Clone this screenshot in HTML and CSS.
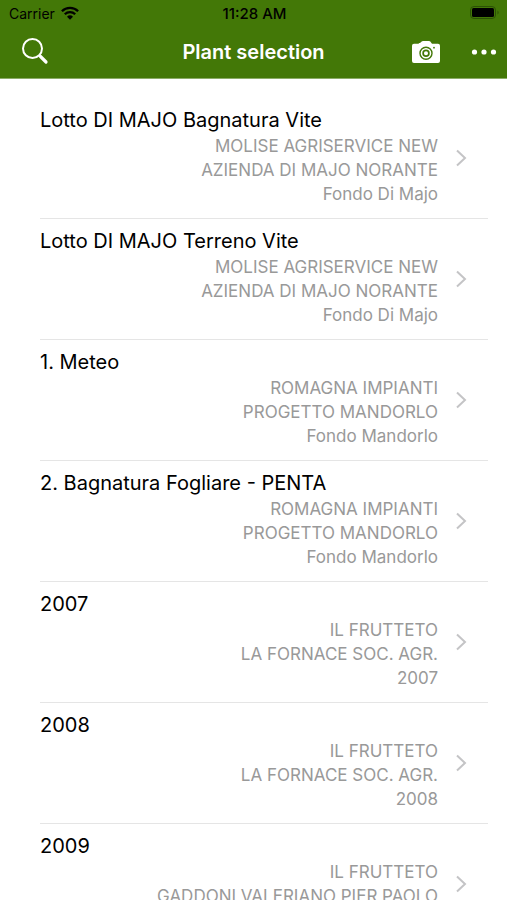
FILE: index.html
```html
<!DOCTYPE html>
<html lang="en">
<head>
<meta charset="utf-8">
<meta name="viewport" content="width=device-width, initial-scale=1">
<title>Plant selection</title>
<link rel="stylesheet" href="styles.css">
</head>
<body>
<header class="header">
  <div class="status">
    <div class="carrier">
      <span>Carrier</span>
      <svg width="18" height="14" viewBox="0 0 18 14" fill="none" stroke="currentColor" stroke-width="2.3" aria-hidden="true">
        <path d="M.9 5.2a11.5 11.5 0 0 1 16.2 0M3.8 8.3a7.4 7.4 0 0 1 10.4 0"/>
        <path d="M6 10.7a4.3 4.3 0 0 1 6 0L9 13.7z" fill="currentColor" stroke="none"/>
      </svg>
    </div>
    <time class="clock">11:28 AM</time>
    <svg class="battery" width="30" height="14" viewBox="0 0 30 14" aria-hidden="true">
      <rect x=".5" y=".5" width="25" height="12" rx="3.5" fill="none" stroke="#2c5205"/>
      <rect x="2" y="2" width="22" height="9" rx="1.5" fill="#000"/>
      <path d="M27.5 4.5a2.4 2.4 0 0 1 0 4z" fill="#2c5205"/>
    </svg>
  </div>
  <div class="toolbar">
    <button class="tool search" type="button" aria-label="Search">
      <svg width="28" height="28" viewBox="0 0 28 28" fill="none" stroke="currentColor" aria-hidden="true">
        <circle cx="11.5" cy="10.5" r="9.5" stroke-width="2"/>
        <path d="M18.300 17.300l1.500 1.500" stroke-width="2"/>
        <path d="M19.500 18.500l5.500 5.500" stroke-width="3.200" stroke-linecap="round"/>
      </svg>
    </button>
    <h1 class="heading">Plant selection</h1>
    <div class="actions">
      <button class="tool" type="button" aria-label="Scan with camera">
        <svg width="30" height="22" viewBox="0 0 30 22" aria-hidden="true">
          <path d="M3 2.8h4.500l.7-.7h.8L10.700.6Q11.200 0 12 0h6q.8 0 1.300.6L21 2.800h6a2 2 0 0 1 2 2V20a2 2 0 0 1-2 2H3a2 2 0 0 1-2-2V4.800a2 2 0 0 1 2-2z" fill="#fff"/>
          <circle cx="15" cy="12.200" r="6" fill="none" stroke="#437807" stroke-width="1.400"/>
          <circle cx="15" cy="12.200" r="2.900" fill="none" stroke="#437807" stroke-width="1.700"/>
          <circle cx="23" cy="6.700" r=".9" fill="#437807"/>
        </svg>
      </button>
      <button class="tool" type="button" aria-label="More options">
        <svg width="26" height="6" viewBox="0 0 26 6" fill="currentColor" aria-hidden="true">
          <circle cx="3.500" cy="3" r="2.600"/><circle cx="13" cy="3" r="2.600"/><circle cx="22.500" cy="3" r="2.600"/>
        </svg>
      </button>
    </div>
  </div>
</header>
<main class="content">
  <ul class="list">
    <li><a class="row" href="#p1"><span class="name">Lotto DI MAJO Bagnatura Vite</span><span class="detail"><span>MOLISE AGRISERVICE NEW</span><span>AZIENDA DI MAJO NORANTE</span><span>Fondo Di Majo</span></span><svg class="chevron" viewBox="0 0 12 18"><path d="M2 1.500l8 7.500-8 7.500"/></svg></a></li>
    <li><a class="row" href="#p2"><span class="name">Lotto DI MAJO Terreno Vite</span><span class="detail"><span>MOLISE AGRISERVICE NEW</span><span>AZIENDA DI MAJO NORANTE</span><span>Fondo Di Majo</span></span><svg class="chevron" viewBox="0 0 12 18"><path d="M2 1.500l8 7.500-8 7.500"/></svg></a></li>
    <li><a class="row" href="#p3"><span class="name">1. Meteo</span><span class="detail"><span>ROMAGNA IMPIANTI</span><span>PROGETTO MANDORLO</span><span>Fondo Mandorlo</span></span><svg class="chevron" viewBox="0 0 12 18"><path d="M2 1.500l8 7.500-8 7.500"/></svg></a></li>
    <li><a class="row" href="#p4"><span class="name">2. Bagnatura Fogliare - PENTA</span><span class="detail"><span>ROMAGNA IMPIANTI</span><span>PROGETTO MANDORLO</span><span>Fondo Mandorlo</span></span><svg class="chevron" viewBox="0 0 12 18"><path d="M2 1.500l8 7.500-8 7.500"/></svg></a></li>
    <li><a class="row" href="#p5"><span class="name">2007</span><span class="detail"><span>IL FRUTTETO</span><span>LA FORNACE SOC. AGR.</span><span>2007</span></span><svg class="chevron" viewBox="0 0 12 18"><path d="M2 1.500l8 7.500-8 7.500"/></svg></a></li>
    <li><a class="row" href="#p6"><span class="name">2008</span><span class="detail"><span>IL FRUTTETO</span><span>LA FORNACE SOC. AGR.</span><span>2008</span></span><svg class="chevron" viewBox="0 0 12 18"><path d="M2 1.500l8 7.500-8 7.500"/></svg></a></li>
    <li><a class="row" href="#p7"><span class="name">2009</span><span class="detail"><span>IL FRUTTETO</span><span>GADDONI VALERIANO PIER PAOLO</span></span><svg class="chevron" viewBox="0 0 12 18"><path d="M2 1.500l8 7.500-8 7.500"/></svg></a></li>
  </ul>
</main>
</body>
</html>
```
FILE: styles.css
```css
* {
  box-sizing: border-box;
}

body {
  margin: 0;
  height: 100vh;
  display: flex;
  flex-direction: column;
  background: #fff;
  color: #000;
  font-family: Inter, "Liberation Sans", sans-serif;
}

.header {
  flex: none;
  background: #437807;
  border-bottom: 1px solid #8bac66;
}

.status {
  display: grid;
  grid-template-columns: 1fr auto 1fr;
  align-items: center;
  height: 26px;
  padding: 0 7px 0 9px;
  font-size: 14px;
}

.carrier {
  display: flex;
  align-items: center;
  gap: 6px;
}

.clock {
  font-size: 15px;
  font-weight: 500;
}

.battery {
  justify-self: end;
}

.toolbar {
  display: grid;
  grid-template-columns: 1fr auto 1fr;
  align-items: center;
  height: 52px;
  padding: 0 10px;
  color: #fff;
}

.tool {
  display: flex;
  align-items: center;
  justify-self: start;
  min-height: 28px;
  padding: 0;
  border: 0;
  background: none;
  color: inherit;
}

.search {
  margin-left: 11px;
}

.heading {
  margin: 0;
  font-size: 20px;
  font-weight: 600;
}

.actions {
  display: flex;
  align-items: center;
  justify-self: end;
  gap: 30px;
}

.content {
  flex: 1;
  min-height: 0;
  overflow-y: auto;
  scrollbar-width: none;
}

.list {
  margin: 0;
  padding: 19px 19px 0 40px;
  list-style: none;
}

.row {
  display: grid;
  grid-template-columns: 1fr 12px;
  align-items: center;
  column-gap: 17px;
  min-height: 121px;
  padding: 10px 21px 10px 0;
  border-bottom: 1px solid #e5e5e5;
  color: inherit;
  text-decoration: none;
}

.name {
  grid-area: 1 / 1;
  align-self: start;
  font-size: 20px;
  line-height: 24px;
}

.detail {
  grid-area: 1 / 1;
  align-self: start;
  display: flex;
  flex-direction: column;
  padding-top: 26px;
  color: #999;
  font-size: 17px;
  line-height: 24px;
  text-align: right;
}

.chevron {
  grid-area: 1 / 2;
  width: 12px;
  height: 18px;
  fill: none;
  stroke: #c4c4c6;
  stroke-width: 2;
}
```
